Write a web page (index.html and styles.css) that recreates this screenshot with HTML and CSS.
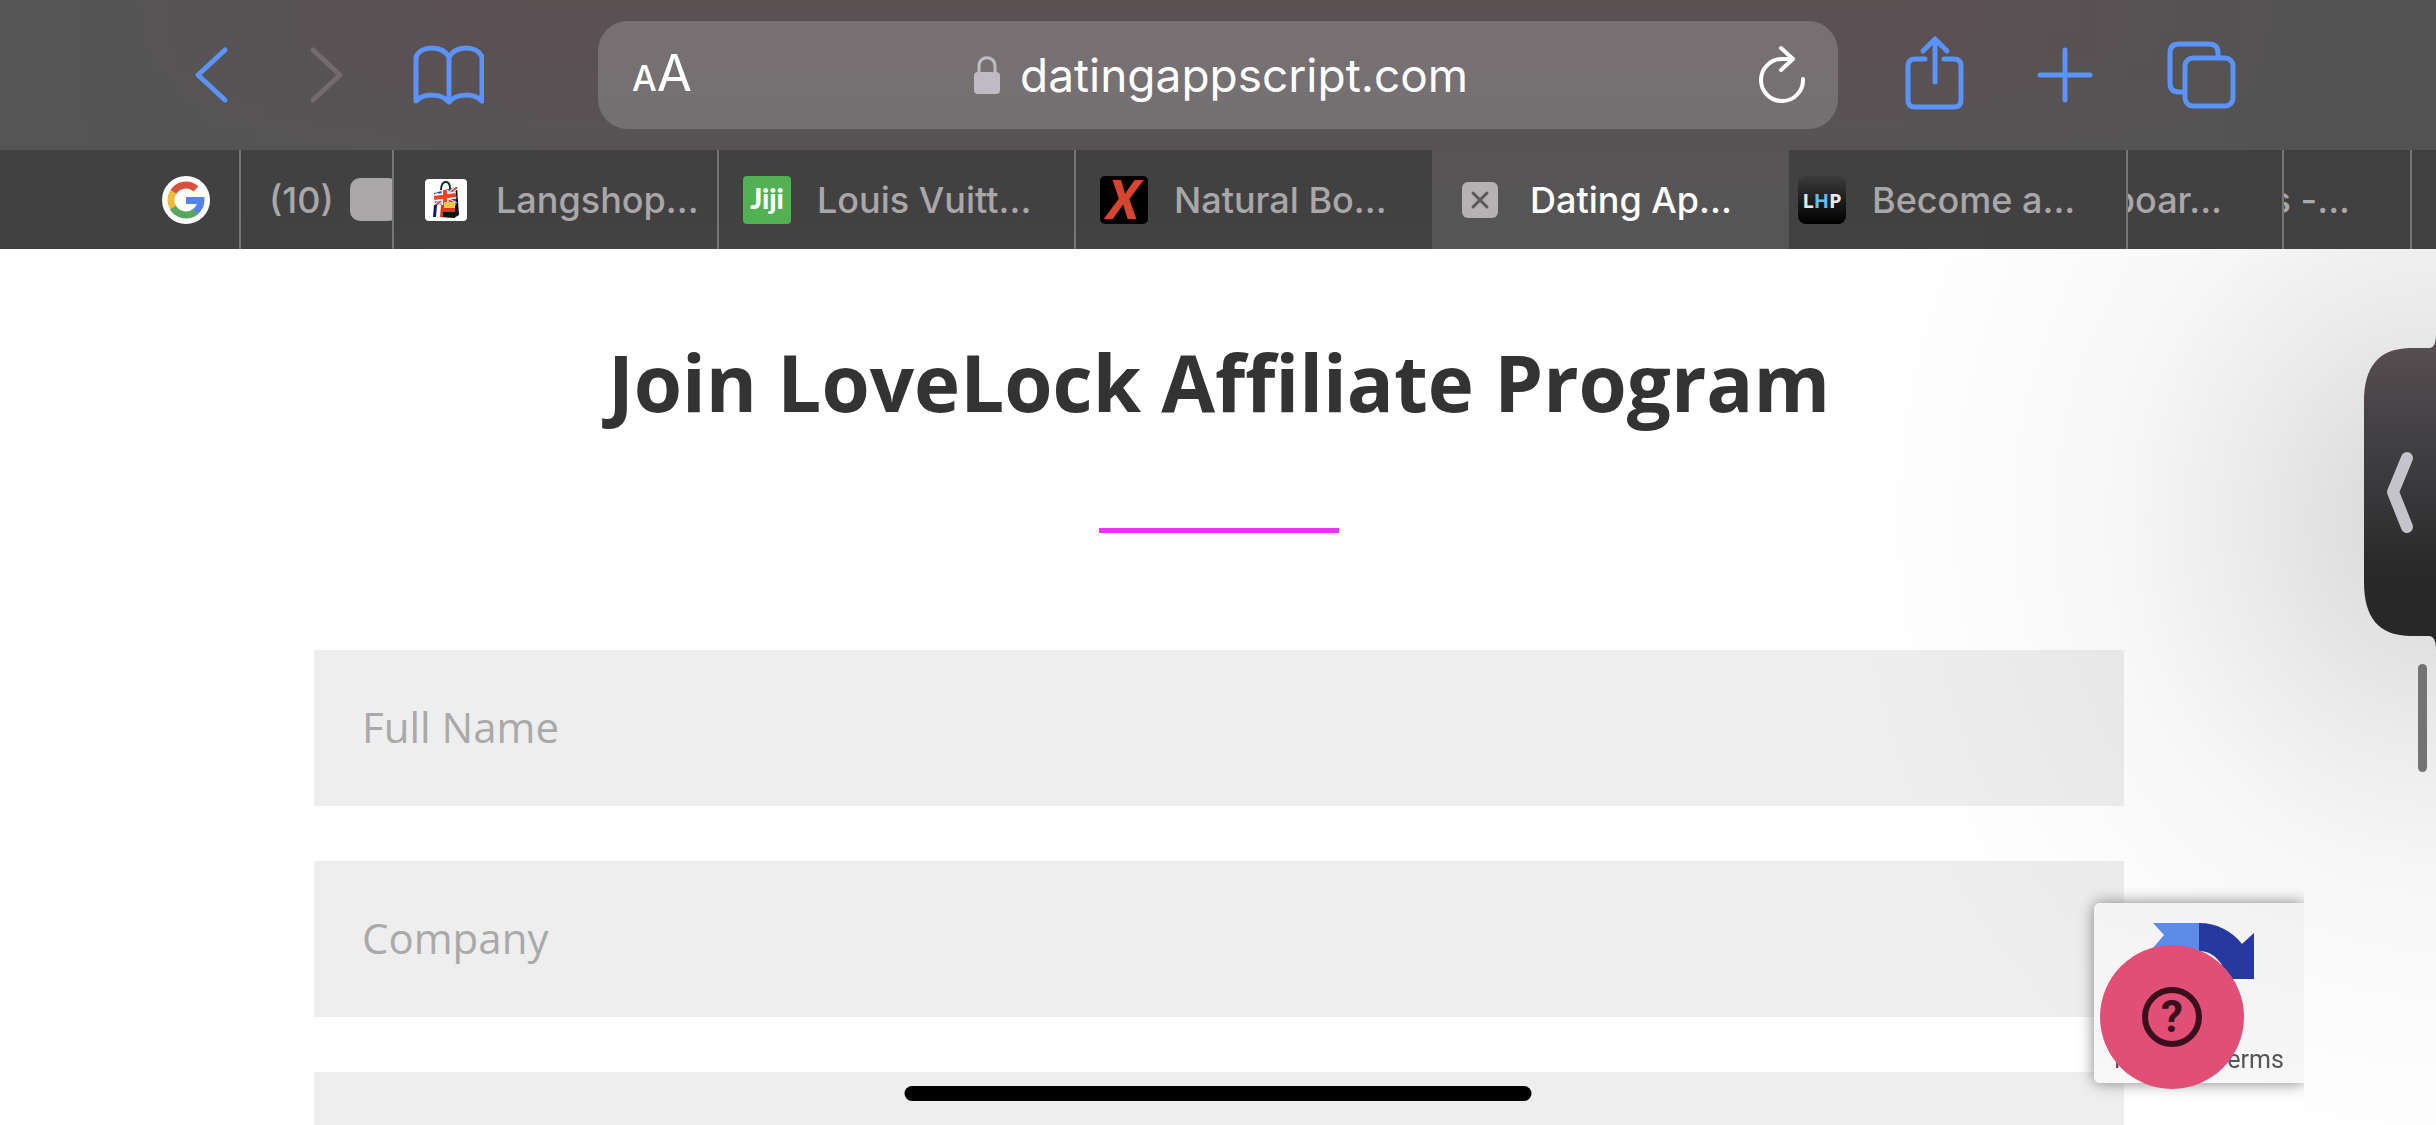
FILE: index.html
```html
<!DOCTYPE html>
<html lang="en">
<head>
    <meta charset="UTF-8">
    <meta name="viewport" content="width=device-width, initial-scale=1.0">
    <title>Dating App Script - Affiliate Program</title>
    <link rel="stylesheet" href="styles.css">
</head>
<body>
    <header class="browser">
        <div class="toolbar">
            <div class="toolbar-left">
                <button type="button" class="tool" aria-label="Back">
                    <svg viewBox="0 0 72 80"><path d="M49 15 L22 40 L49 65"/></svg>
                </button>
                <button type="button" class="tool tool-disabled" aria-label="Forward" disabled>
                    <svg viewBox="0 0 72 80"><path d="M19 15 L46 40 L19 65"/></svg>
                </button>
                <button type="button" class="tool" aria-label="Bookmarks">
                    <svg viewBox="0 0 72 80"><path d="M37 22 C30 10 9 10 4 22 V66 C12 58 29 58 37 67 C45 58 62 58 70 66 V22 C65 10 44 10 37 22 V67"/></svg>
                </button>
            </div>

            <div class="address">
                <button type="button" class="text-size" aria-label="Text size"><small>A</small>A</button>
                <div class="url">
                    <svg class="lock" viewBox="0 0 26 38"><path d="M5 18 V10 C5 -1 21 -1 21 10 V18" fill="none" stroke="#bebbc2" stroke-width="3"/><rect x="0" y="16" width="26" height="22" rx="4" fill="#bebbc2"/></svg>
                    <input type="text" class="url-input" value="datingappscript.com" aria-label="Address">
                </div>
                <button type="button" class="reload" aria-label="Reload">
                    <svg viewBox="0 0 48 60"><path d="M45 34 A21 21 0 1 1 24 14 H35 M23 3 L35 14 L23 25"/></svg>
                </button>
            </div>

            <div class="toolbar-right">
                <button type="button" class="tool" aria-label="Share">
                    <svg viewBox="0 0 72 80"><path d="M27 24 H17 Q10 24 10 31 V65 Q10 72 17 72 H56 Q63 72 63 65 V31 Q63 24 56 24 H46 M37 47 V4 M25 16 L37 4 L49 16"/></svg>
                </button>
                <button type="button" class="tool" aria-label="New tab">
                    <svg viewBox="0 0 72 80"><path d="M33 15 V65 M8 40 H58"/></svg>
                </button>
                <button type="button" class="tool" aria-label="Show tabs">
                    <svg viewBox="0 0 72 80"><path d="M18 57 H13 Q4 57 4 48 V18 Q4 9 13 9 H43 Q52 9 52 18 V23"/><rect x="19" y="23" width="48" height="48" rx="8"/></svg>
                </button>
            </div>
        </div>

        <nav class="tabs">
            <a href="#" class="tab tab-pinned" aria-label="Google">
                <svg class="favicon" viewBox="0 0 48 48">
                    <circle cx="24" cy="24" r="24" fill="#fff"/>
                    <g fill="none" stroke-width="7">
                        <path d="M11 16.500 A15 15 0 0 1 34 12.800" stroke="#d9503f"/>
                        <path d="M11.500 32.300 A15 15 0 0 1 11.500 15.700" stroke="#f0b93a"/>
                        <path d="M33.600 35.500 A15 15 0 0 1 11 31.500" stroke="#58a55c"/>
                        <path d="M24 24.500 H38.900 A15 15 0 0 1 33.200 35.800" stroke="#5383ec"/>
                    </g>
                </svg>
            </a>
            <a href="#" class="tab tab-count"><span>(10)</span><i class="missing-glyph"></i></a>
            <a href="#" class="tab tab-wide">
                <svg class="favicon" viewBox="0 0 48 48">
                    <rect x="3" y="3" width="42" height="42" rx="4" fill="#fff"/>
                    <path d="M19 14 C19 3 29 3 28 14" fill="none" stroke="#222" stroke-width="2"/>
                    <path d="M35 11 L37 39 L32 42 V12Z" fill="#111"/>
                    <path d="M12 17 L34 11 V28 L13 29Z" fill="#2b4ba5"/>
                    <path d="M13 18 L34 28 M34 12 L14 29" stroke="#fff" stroke-width="4"/>
                    <path d="M13 18 L34 28 M34 12 L14 29" stroke="#e8432e" stroke-width="2"/>
                    <path d="M12 22 L34 19 M23 14 V29" stroke="#fff" stroke-width="7"/>
                    <path d="M12 22 L34 19 M23 14 V29" stroke="#ee4327" stroke-width="4"/>
                    <path d="M12 29 H15 L14 41 H11Z" fill="#161a6b"/>
                    <path d="M19 29 H33 V42 L18 41Z" fill="#e8341f"/>
                    <path d="M22 26 H33 V32 H22Z" fill="#f6c945"/>
                    <path d="M21 36 H33 V42 L21 41Z" fill="#111"/>
                </svg>
                <span>Langshop...</span>
            </a>
            <a href="#" class="tab">
                <svg class="favicon" viewBox="0 0 48 48">
                    <rect width="48" height="48" rx="4" fill="#52b152"/>
                    <text x="24" y="33" class="jiji">Jiji</text>
                </svg>
                <span>Louis Vuitt...</span>
            </a>
            <a href="#" class="tab tab-plain">
                <svg class="favicon" viewBox="0 0 48 48">
                    <rect width="48" height="48" rx="5" fill="#000"/>
                    <text x="23" y="43" class="xmark">X</text>
                </svg>
                <span>Natural Bo...</span>
            </a>
            <div class="tab tab-plain tab-active">
                <button type="button" class="tab-close" aria-label="Close tab">
                    <svg viewBox="0 0 48 48"><rect x="6" y="6" width="36" height="36" rx="6" fill="#b4b2b3"/><path d="M17 17 L31 31 M31 17 L17 31" stroke="#5a5858" stroke-width="3" stroke-linecap="round"/></svg>
                </button>
                <a href="#">Dating Ap...</a>
            </div>
            <a href="#" class="tab tab-tucked">
                <svg class="favicon" viewBox="0 0 48 48">
                    <defs><linearGradient id="lhp" x2="0" y2="1"><stop offset="0" stop-color="#3b3b3b"/><stop offset="1" stop-color="#000"/></linearGradient></defs>
                    <rect width="48" height="48" rx="8" fill="url(#lhp)"/>
                    <text x="24" y="32" class="lhp">L<tspan fill="#69b9e0">H</tspan>P</text>
                </svg>
                <span>Become a...</span>
            </a>
            <a href="#" class="tab tab-stacked"><span>boar...</span></a>
            <a href="#" class="tab tab-stacked"><span>s -...</span></a>
            <span class="tab tab-plain"></span>
        </nav>
    </header>

    <main class="page">
        <h1>Join LoveLock Affiliate Program</h1>
        <div class="divider"></div>

        <form class="affiliate-form">
            <input type="text" name="full_name" placeholder="Full Name" aria-label="Full Name">
            <input type="text" name="company" placeholder="Company" aria-label="Company">
            <input type="text" name="email" aria-label="Email">
        </form>

        <div class="edge-shade"></div>
    </main>

    <div class="recaptcha-clip">
        <div class="recaptcha">
            <svg class="recaptcha-logo" viewBox="0 0 104 58">
                <path d="M0 1 H46 V29 L0 26 L11 13Z" fill="#5c8bea"/>
                <path d="M46 1 C64 1 79 9 89 22 L101 11 V57 H55 L69 43 C63 34 56 29 46 29Z" fill="#26399f"/>
            </svg>
            <div class="recaptcha-links"><a href="#">Privacy</a> - <a href="#">Terms</a></div>
        </div>
    </div>

    <button type="button" class="help" aria-label="Help"><span>?</span></button>

    <button type="button" class="side-handle" aria-label="Show video">
        <svg viewBox="0 0 72 320">
            <defs><linearGradient id="handle" x2="0" y2="1"><stop offset="0" stop-color="#5a5053"/><stop offset=".3" stop-color="#434144"/><stop offset=".55" stop-color="#363638"/><stop offset=".75" stop-color="#292929"/><stop offset="1" stop-color="#272727"/></linearGradient></defs>
            <path d="M72 2 Q72 16 65 16 H45 C15 17 0 34 0 70 V250 C0 286 15 303 45 304 H65 Q72 304 72 318Z" fill="url(#handle)"/>
            <path d="M43 126 L29 160 L43 195" fill="none" stroke="#c6c4cb" stroke-width="12" stroke-linecap="round" stroke-linejoin="round"/>
        </svg>
    </button>
    <div class="scroll-thumb"></div>
    <div class="home-indicator"></div>
</body>
</html>
```
FILE: styles.css
```css
* {
    margin: 0;
    padding: 0;
    box-sizing: border-box;
}

body {
    font-family: 'Open Sans', Arial, sans-serif;
    background-color: #fff;
    color: #333;
    height: 100vh;
    overflow: hidden;
    display: flex;
    flex-direction: column;
}

button {
    background: none;
    border: none;
    cursor: pointer;
}

a {
    color: inherit;
    text-decoration: none;
}

svg {
    display: block;
}

/* Browser chrome */
.browser {
    font-family: Inter, 'Liberation Sans', sans-serif;
    background: linear-gradient(90deg, #555 3%, transparent 22%, transparent 78%, #535353 96%),
                linear-gradient(#5c5053, #5b5053 20%, #575455 60%, #565656);
}

.toolbar {
    display: grid;
    grid-template-columns: 598px 1fr 598px;
    align-items: center;
    height: 150px;
}

.toolbar-left,
.toolbar-right {
    display: flex;
}

.toolbar-left {
    gap: 46px;
    padding-left: 176px;
}

.toolbar-right {
    gap: 62px;
    padding-left: 60px;
}

.tool svg {
    width: 72px;
    height: 80px;
    fill: none;
    stroke: #5b93f9;
    stroke-width: 5;
    stroke-linecap: round;
    stroke-linejoin: round;
}

.tool-disabled svg {
    stroke: #736b6e;
}

.address {
    display: flex;
    align-items: center;
    justify-content: space-between;
    height: 108px;
    padding: 0 32px 0 34px;
    border-radius: 30px;
    background: linear-gradient(#787072, #747172);
    color: #fff;
}

.text-size {
    font: 400 51px/64px Inter, sans-serif;
    color: #fff;
}

.text-size small {
    font-size: 35px;
    font-weight: 500;
}

.url {
    display: flex;
    align-items: center;
    gap: 20px;
}

.lock {
    width: 26px;
    height: 38px;
}

.url-input {
    width: 456px;
    border: none;
    outline: none;
    background: transparent;
    color: #fff;
    font: 400 46px/60px Inter, sans-serif;
}

.reload svg {
    width: 48px;
    height: 60px;
    fill: none;
    stroke: #fff;
    stroke-width: 4;
    stroke-linecap: round;
    stroke-linejoin: round;
}

/* Tab strip */
.tabs {
    display: grid;
    grid-template-columns: 241fr 153fr 325fr 357fr 356fr 357fr 339fr 156fr 128fr 24fr;
    height: 99px;
}

.tab {
    display: flex;
    align-items: center;
    gap: 26px;
    min-width: 0;
    overflow: hidden;
    padding-left: 24px;
    border-right: 2px solid #767475;
    background-color: rgba(45, 45, 45, 0.5);
    color: #a9a7a8;
    font-size: 36px;
    font-weight: 500;
    white-space: nowrap;
}

.tab-plain {
    border-right: none;
}

.tab-active {
    background: none;
    color: #fff;
}

.tab-pinned {
    justify-content: flex-end;
    padding-right: 29px;
}

.tab-count {
    gap: 16px;
    padding-left: 28px;
}

.tab-wide {
    padding-left: 28px;
}

.tab-tucked {
    padding-left: 9px;
}

.tab-stacked {
    justify-content: flex-end;
    padding: 0 60px 0 0;
}

.tab-stacked span {
    display: flex;
    justify-content: flex-end;
    min-width: 0;
    overflow: hidden;
    white-space: pre;
}

.favicon,
.tab-close svg {
    flex: none;
    width: 48px;
    height: 48px;
}

.missing-glyph {
    flex: none;
    width: 48px;
    height: 43px;
    border-radius: 10px;
    background-color: #a9a7a8;
}

.jiji {
    font: 900 28px Lato, sans-serif;
    fill: #fff;
    text-anchor: middle;
}

.xmark {
    font: italic 700 54px 'Open Sans', sans-serif;
    fill: #d5452f;
    text-anchor: middle;
}

.lhp {
    font: 700 20px 'Open Sans', sans-serif;
    fill: #e8e8e8;
    text-anchor: middle;
}

/* Page content */
.page {
    position: relative;
    flex: 1;
    min-height: 0;
    overflow: hidden;
    padding: 80px 312px 0 314px;
}

h1 {
    font-size: 78px;
    line-height: 106px;
    font-weight: 700;
    text-align: center;
}

.divider {
    width: 240px;
    height: 5px;
    margin: 93px auto 117px;
    background-color: #e935f5;
}

.affiliate-form {
    display: flex;
    flex-direction: column;
    gap: 55px;
}

.affiliate-form input {
    width: 100%;
    height: 156px;
    padding: 0 48px 4px;
    border: none;
    border-radius: 0;
    background-color: #eee;
    color: #333;
    font-family: inherit;
    font-size: 42px;
}

.affiliate-form input::placeholder {
    color: #a9a9a9;
    opacity: 1;
}

.edge-shade {
    position: absolute;
    inset: 0;
    pointer-events: none;
    background: radial-gradient(600px 680px at 100% 270px,
        rgba(0, 0, 0, 0.15),
        rgba(0, 0, 0, 0.13) 13%,
        rgba(0, 0, 0, 0.08) 32%,
        rgba(0, 0, 0, 0.033) 53%,
        rgba(0, 0, 0, 0.01) 78%,
        transparent);
}

/* Floating items */
.recaptcha-clip {
    position: fixed;
    right: 132px;
    bottom: 12px;
    padding: 30px 0 30px 30px;
    overflow: hidden;
}

.recaptcha {
    width: 210px;
    height: 180px;
    padding-top: 19px;
    border-radius: 6px 0 0 6px;
    background: linear-gradient(200deg, #f2f2f2, #f8f8f8);
    box-shadow: 0 0 15px #808080;
}

.recaptcha-logo {
    width: 104px;
    height: 58px;
    margin-left: 59px;
}

.recaptcha-links {
    margin-top: 66px;
    padding-left: 20px;
    font: 400 25px/28px Roboto, sans-serif;
    color: #555;
    white-space: nowrap;
}

.help {
    position: fixed;
    right: 192px;
    bottom: 36px;
    display: flex;
    align-items: center;
    justify-content: center;
    width: 144px;
    height: 144px;
    border-radius: 50%;
    background-color: #e14f76;
}

.help span {
    width: 60px;
    height: 60px;
    border: 6px solid #3a0f1b;
    border-radius: 50%;
    color: #3a0f1b;
    font: 700 44px/48px Roboto, sans-serif;
}

.side-handle {
    position: fixed;
    top: 332px;
    right: 0;
}

.side-handle svg {
    width: 72px;
    height: 320px;
}

.scroll-thumb {
    position: fixed;
    top: 664px;
    right: 9px;
    width: 9px;
    height: 108px;
    border-radius: 5px;
    background-color: #737373;
}

.home-indicator {
    position: fixed;
    left: 50%;
    bottom: 24px;
    width: 627px;
    height: 15px;
    border-radius: 8px;
    background-color: #000;
    transform: translateX(-50%);
}
```
